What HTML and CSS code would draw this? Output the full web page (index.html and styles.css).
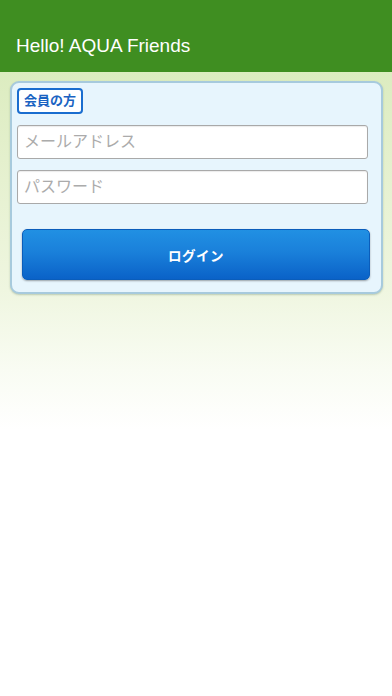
FILE: index.html
```html
<!DOCTYPE html>
<html lang="ja">
<head>
    <meta charset="UTF-8">
    <meta name="viewport" content="width=device-width, initial-scale=1.0">
    <title>Hello! AQUA Friends</title>
    <link rel="stylesheet" href="styles.css">
</head>
<body>
    <header class="app-header">
        <h1 class="app-title">Hello! AQUA Friends</h1>
    </header>

    <main class="content">
        <form class="login-card">
            <div class="badge">会員の方</div>
            <input class="field" type="email" placeholder="メールアドレス">
            <input class="field" type="password" placeholder="パスワード">
            <button class="login-button" type="button">ログイン</button>
        </form>
    </main>
</body>
</html>
```

FILE: styles.css
```css
html {
    height: 100%;
    background-color: #fff;
}

body {
    margin: 0;
    height: 100%;
    font-family: "Liberation Sans", "Noto Sans CJK JP", sans-serif;
    background: linear-gradient(to bottom, #dcecc0 72px, #e6f1d0 180px, #eff6e0 290px, #f9fcf3 370px, #ffffff 430px) no-repeat;
}

.app-header {
    box-sizing: border-box;
    height: 72px;
    padding: 36px 16px 0;
    background-color: #3f8e21;
}

.app-title {
    margin: 0;
    font-size: 19px;
    font-weight: normal;
    line-height: 20px;
    color: #ffffff;
}

.content {
    padding: 9px 9px 0 10px;
}

.login-card {
    display: flex;
    flex-direction: column;
    align-items: flex-start;
    margin: 0;
    padding: 5px 13px 12px 5px;
    border: 2px solid #a7cadd;
    border-radius: 9px;
    background-color: #e7f5fd;
    box-shadow: 0 1px 2px rgba(90, 120, 90, 0.35);
}

.badge {
    box-sizing: border-box;
    height: 26px;
    padding: 0 5px;
    border: 2px solid #1a6dcf;
    border-radius: 4px;
    background-color: #ffffff;
    color: #1a63c2;
    font-size: 13px;
    font-weight: bold;
    line-height: 22px;
}

.field {
    box-sizing: border-box;
    width: 100%;
    height: 34px;
    margin: 11px 0 0;
    padding: 0 6px;
    border: 1px solid #a9a9a9;
    border-radius: 3px;
    background-color: #ffffff;
    font-family: "Liberation Sans", "Noto Sans CJK JP", sans-serif;
    font-size: 16px;
    box-shadow: inset 0 1px 1px rgba(0, 0, 0, 0.08);
}

.field::placeholder {
    color: #ababab;
}

.login-button {
    box-sizing: border-box;
    width: 348px;
    height: 51px;
    margin: 25px 0 0 5px;
    border: 1px solid #0a5dbb;
    border-radius: 5px;
    background: linear-gradient(to bottom, #2190e3 0%, #1a80da 45%, #0a62c8 100%);
    box-shadow: 0 1px 2px rgba(0, 0, 0, 0.35);
    color: #ffffff;
    font-family: "Liberation Sans", "Noto Sans CJK JP", sans-serif;
    font-size: 13.5px;
    font-weight: bold;
    letter-spacing: 0.5px;
}
```
